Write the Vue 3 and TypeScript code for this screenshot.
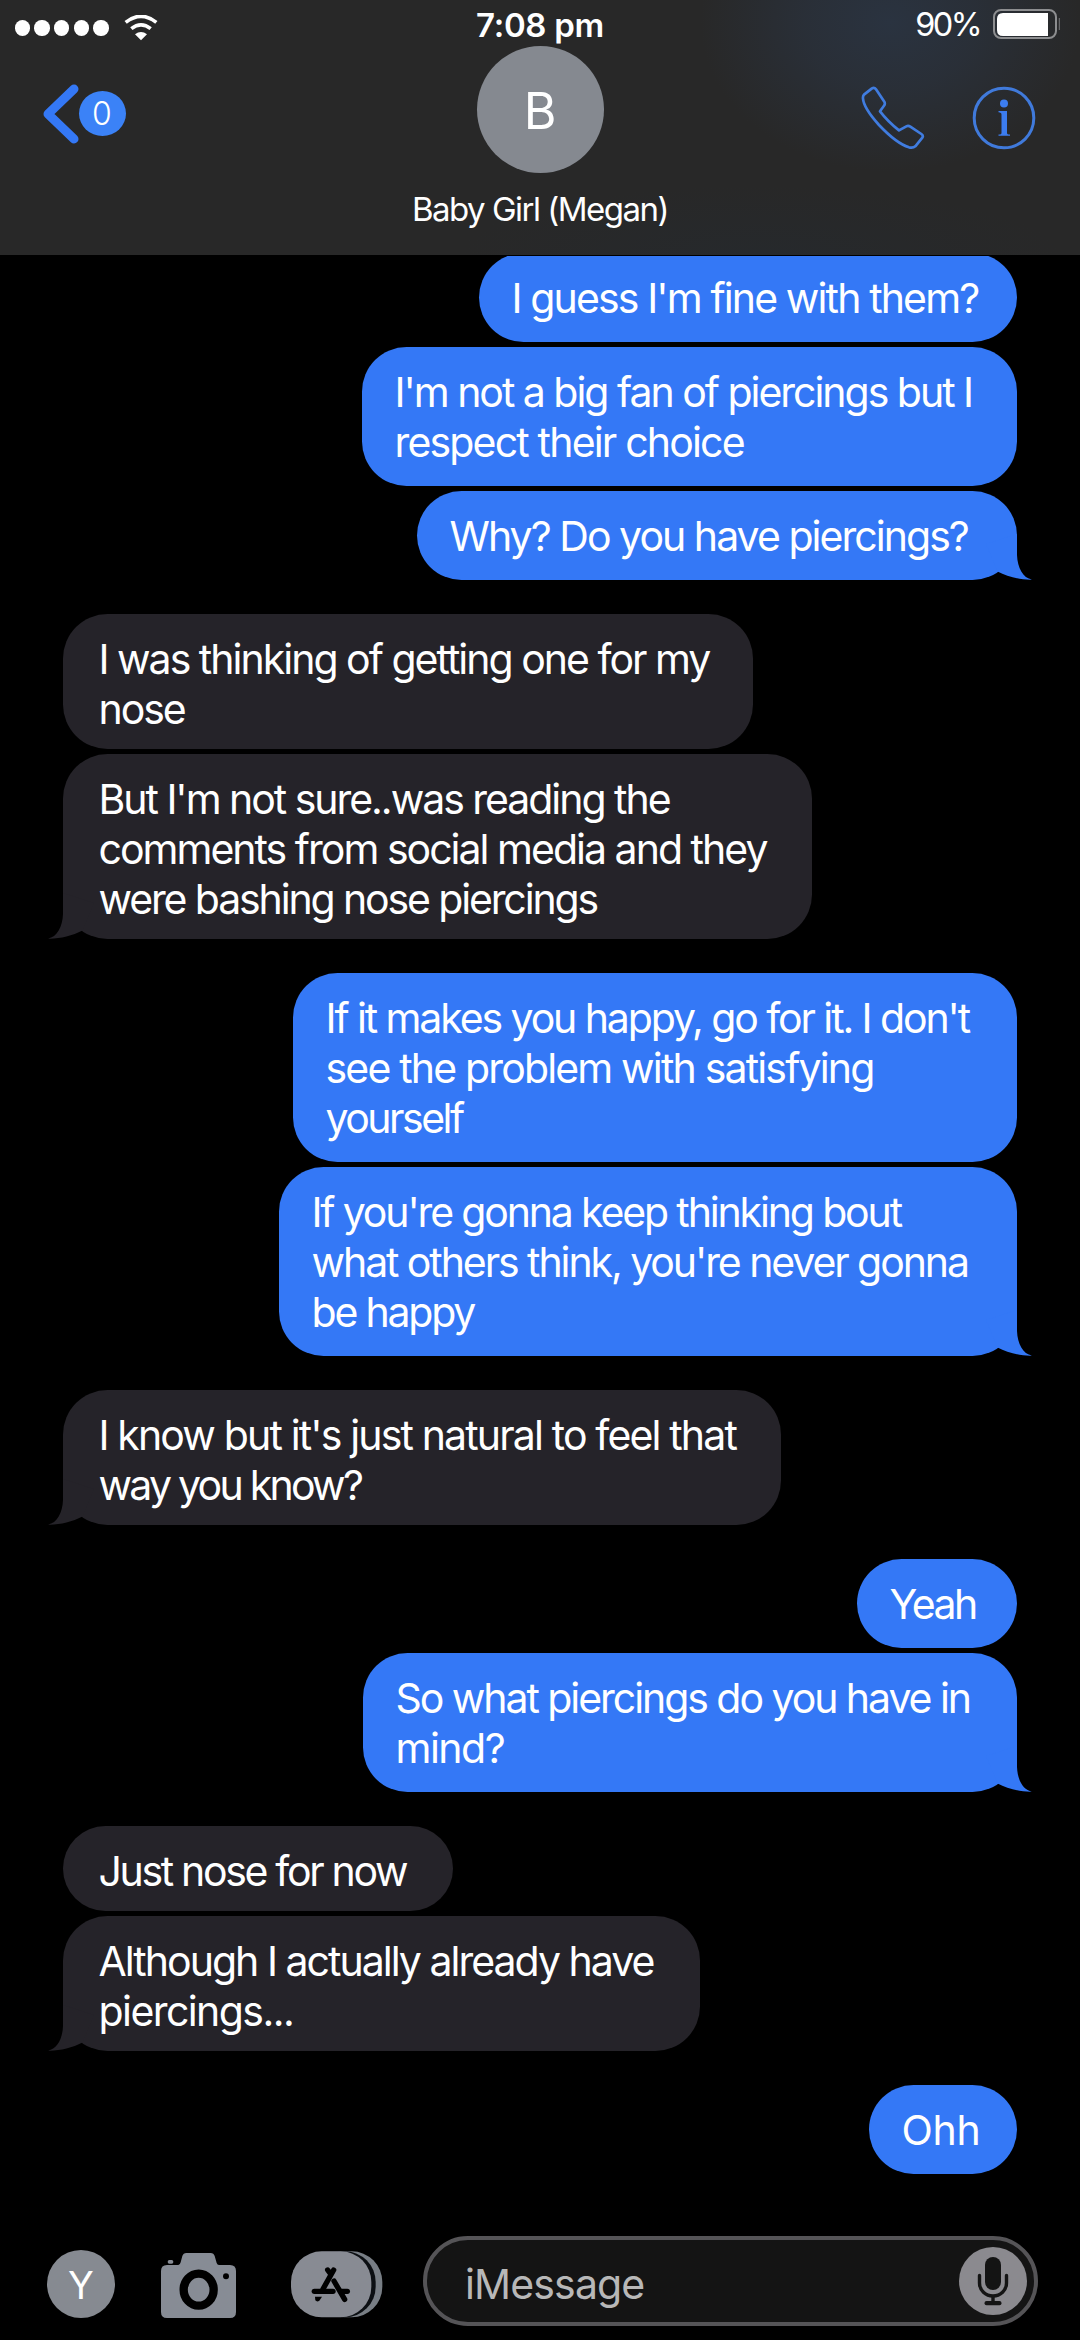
<script setup lang="ts">
interface Line {
  text: string
  spacing: number
}

interface Message {
  from: 'me' | 'them'
  width: number
  lines: Line[]
  tail?: boolean
}

const l = (text: string, spacing: number): Line => ({ text, spacing })

const groups: Message[][] = [
  [
    { from: 'me', width: 538, lines: [l("I guess I'm fine with them?", -1.87)] },
    {
      from: 'me',
      width: 655,
      lines: [l("I'm not a big fan of piercings but I", -2.02), l('respect their choice', -1.82)],
    },
    { from: 'me', width: 600, tail: true, lines: [l('Why? Do you have piercings?', -1.96)] },
  ],
  [
    { from: 'them', width: 690, lines: [l('I was thinking of getting one for my', -1.99), l('nose', -2.07)] },
    {
      from: 'them',
      width: 749,
      tail: true,
      lines: [
        l("But I'm not sure..was reading the", -2.03),
        l('comments from social media and they', -1.98),
        l('were bashing nose piercings', -2.13),
      ],
    },
  ],
  [
    {
      from: 'me',
      width: 724,
      lines: [
        l("If it makes you happy, go for it. I don't", -2.1),
        l('see the problem with satisfying', -1.83),
        l('yourself', -2.5),
      ],
    },
    {
      from: 'me',
      width: 738,
      tail: true,
      lines: [
        l("If you're gonna keep thinking bout", -2.15),
        l("what others think, you're never gonna", -2.08),
        l('be happy', -2.2),
      ],
    },
  ],
  [
    {
      from: 'them',
      width: 718,
      tail: true,
      lines: [l("I know but it's just natural to feel that", -1.85), l('way you know?', -2.74)],
    },
  ],
  [
    { from: 'me', width: 160, lines: [l('Yeah', -2.5)] },
    { from: 'me', width: 654, tail: true, lines: [l('So what piercings do you have in', -2.05), l('mind?', -1.5)] },
  ],
  [
    { from: 'them', width: 390, lines: [l('Just nose for now', -2.33)] },
    {
      from: 'them',
      width: 637,
      tail: true,
      lines: [l('Although I actually already have', -1.98), l('piercings...', -1.57)],
    },
  ],
  [{ from: 'me', width: 148, lines: [l('Ohh', -0.25)] }],
]
</script>

<template>
  <div class="screen">
    <header class="header">
      <div class="status">
        <div class="signal">
          <i v-for="n in 5" :key="n" class="dot"></i>
          <svg class="wifi" width="34" height="26" viewBox="0 0 102 78">
            <path d="M5 22 Q51 -14 97 22" fill="none" stroke="#fff" stroke-width="11" />
            <path d="M22 41 Q51 18 80 41" fill="none" stroke="#fff" stroke-width="11" />
            <path d="M33 58 Q51 44 69 58 L51 76Z" fill="#fff" />
          </svg>
        </div>
        <div class="clock">7:08 pm</div>
        <div class="power">
          <span class="percent">90%</span>
          <svg width="68" height="32" viewBox="0 0 68 32">
            <rect x="1" y="2" width="62" height="28" rx="7" fill="none" stroke="#8d8e90" stroke-width="2" />
            <path d="M10 5 H55 V28 H10 Q4 28 4 22 V11 Q4 5 10 5Z" fill="#fff" />
            <path d="M66.3 10 V22" stroke="#77797b" stroke-width="1" />
          </svg>
        </div>
      </div>
      <div class="nav">
        <div class="back">
          <svg width="36" height="60" viewBox="0 0 36 60">
            <path d="M31 5 L5 30 L31 55" fill="none" stroke="#3478f6" stroke-width="9" stroke-linecap="round" stroke-linejoin="round" />
          </svg>
          <span class="count">0</span>
        </div>
        <div class="contact">
          <div class="avatar">B</div>
          <div class="name">Baby Girl (Megan)</div>
        </div>
        <div class="actions">
          <svg width="64" height="64" viewBox="424 258 192 192">
            <path d="M433 284 L457 265 Q464 261 469 268 L494 305 Q497 310 494 316 L481 334 Q505 365 538 391 L560 379 Q566 376 572 380 L605 402 Q612 407 608 413 L587 439 Q580 445 568 442 Q530 430 478 375 Q432 324 430 296 Q429 289 433 284Z" fill="none" stroke="#407cdf" stroke-width="8" stroke-linejoin="round" />
          </svg>
          <svg width="64" height="64" viewBox="0 0 64 64">
            <circle cx="32" cy="32" r="29.800" fill="none" stroke="#407adb" stroke-width="3" />
            <circle cx="32" cy="17.500" r="4" fill="#3c7df0" />
            <path d="M26.500 25 H35 V47 Q35 48.500 38 48.500 V49.700 H26.500 V48.500 Q29.500 48.500 29.500 47 V28.500 Q29.500 26.500 26.500 26.300Z" fill="#3c7df0" />
          </svg>
        </div>
      </div>
    </header>

    <main class="chat">
      <section v-for="(group, g) in groups" :key="g" class="group">
        <div v-for="(msg, k) in group" :key="k" class="bubble" :class="msg.from" :style="{ width: msg.width + 'px' }">
          <span v-for="line in msg.lines" :key="line.text" class="line" :style="{ letterSpacing: line.spacing + 'px' }">{{ line.text }}</span>
          <svg v-if="msg.tail" class="tail" width="46" height="46" viewBox="0 0 46 46">
            <path d="M31 0 V21 C31.500 34 37 44 46 45.600 C35 46 22 43 11.500 37.500 L0 10Z" fill="currentColor" />
          </svg>
        </div>
      </section>
    </main>

    <footer class="composer">
      <div class="me-avatar">Y</div>
      <svg class="camera" width="75" height="65" viewBox="483 159 225 195">
        <path d="M501 195 H535 Q540 195 542 187 L547 168 Q550 159 559 159 H632 Q641 159 644 168 L650 189 Q652 195 657 195 H690 Q708 195 708 213 V336 Q708 354 690 354 H501 Q483 354 483 336 V213 Q483 195 501 195Z" fill="#878c95" />
        <rect x="503" y="180" width="17" height="11" rx="5" fill="#878c95" />
        <ellipse cx="596" cy="269" rx="45" ry="48" fill="none" stroke="#000" stroke-width="25" />
        <circle cx="678" cy="229" r="9" fill="#000" />
      </svg>
      <svg class="apps" width="92" height="67" viewBox="872 152 276 201">
        <rect x="940" y="153" width="206" height="198" rx="92" fill="#787e85" />
        <rect x="886" y="153" width="240" height="198" rx="92" fill="#0c0f13" />
        <rect x="872" y="153" width="241" height="198" rx="92" fill="#888b93" />
        <g stroke="#000" stroke-width="16" stroke-linecap="round" fill="none">
          <path d="M942 273 H998" />
          <path d="M1024 273 H1041" />
          <path d="M1000 209 L968 266" />
          <path d="M982 209 L988 217" />
          <path d="M1001 242 L1033 297" />
        </g>
        <path d="M944 289 H965 L957 301 Q950 306 945 300Z" fill="#000" />
      </svg>
      <div class="field">
        <span class="placeholder">iMessage</span>
        <svg width="68" height="68" viewBox="0 0 68 68">
          <circle cx="34" cy="34" r="34" fill="#8b8a8f" />
          <rect x="26" y="10" width="16" height="33" rx="8" fill="#141414" />
          <path d="M20.500 28.500 V36 A13.500 13 0 0 0 47.500 36 V28.500" fill="none" stroke="#141414" stroke-width="3.400" stroke-linecap="round" />
          <path d="M34 49 V55" stroke="#141414" stroke-width="3.400" />
          <rect x="25.500" y="54" width="17" height="4.200" rx="2" fill="#141414" />
        </svg>
      </div>
    </footer>
  </div>
</template>

<style>
body {
  background: #000;
}
</style>

<style scoped>
.screen {
  width: 1080px;
  height: 2340px;
  display: flex;
  flex-direction: column;
  overflow: hidden;
  background: #000;
  color: #fff;
  font-family: Inter, Roboto, sans-serif;
}
.header {
  position: relative;
  z-index: 1;
  box-sizing: border-box;
  height: 256px;
  flex: none;
  border-bottom: 1px solid #000;
  background:
    radial-gradient(ellipse 190px 150px at 890px 22px, #2a3340 0%, rgba(42, 50, 62, 0.7) 45%, rgba(40, 41, 43, 0) 100%),
    radial-gradient(ellipse 300px 70px at 760px 255px, #26292c 0%, rgba(40, 40, 40, 0) 100%),
    #282828;
}
.status {
  height: 46px;
  display: grid;
  grid-template-columns: 1fr auto 1fr;
}
.signal {
  display: flex;
  align-items: center;
  gap: 4.4px;
  padding: 6px 0 0 14.7px;
}
.dot {
  width: 15.3px;
  height: 15.3px;
  border-radius: 50%;
  background: #fff;
}
.wifi {
  margin-left: 10.5px;
}
.clock {
  font-size: 33px;
  font-weight: 600;
  line-height: 50px;
  letter-spacing: -0.3px;
}
.power {
  display: flex;
  justify-content: flex-end;
  gap: 13px;
  padding-right: 19px;
}
.power svg {
  margin-top: 8px;
}
.percent {
  font-size: 32.5px;
  line-height: 50px;
  letter-spacing: -2.6px;
}
.nav {
  display: grid;
  grid-template-columns: 1fr auto 1fr;
}
.back {
  display: flex;
  align-items: flex-start;
  padding: 38px 0 0 42.5px;
}
.count {
  width: 47px;
  height: 45px;
  margin-top: 7px;
  border-radius: 50%;
  background: #3b82f7;
  font-size: 32px;
  font-weight: 300;
  line-height: 46px;
  text-align: center;
}
.contact {
  width: 300px;
  display: flex;
  flex-direction: column;
  align-items: center;
}
.avatar {
  width: 127px;
  height: 127px;
  border-radius: 50%;
  background: #858990;
  font-size: 50px;
  line-height: 131px;
  text-align: center;
}
.name {
  margin-top: 11px;
  font-size: 33px;
  line-height: 50px;
  letter-spacing: -1.5px;
}
.actions {
  display: flex;
  justify-content: flex-end;
  align-items: flex-start;
  gap: 47px;
  padding: 40px 44px 0 0;
}
.chat {
  margin-top: -3px;
  flex: 1;
  display: flex;
  flex-direction: column;
  gap: 34px;
  padding: 0 63px;
}
.group {
  display: flex;
  flex-direction: column;
  gap: 5px;
}
.bubble {
  position: relative;
  box-sizing: border-box;
  display: flex;
  flex-direction: column;
  align-items: flex-start;
  border-radius: 44.5px;
  font-size: 41px;
  line-height: 50px;
}
.me {
  align-self: flex-end;
  padding: 20px 0 19px 32.5px;
  background: #3478f6;
}
.them {
  align-self: flex-start;
  padding: 20px 0 15px 35.5px;
  background: #252329;
}
.line {
  white-space: pre;
}
.tail {
  position: absolute;
  bottom: 0;
  right: -15px;
  color: #3478f6;
}
.them .tail {
  right: auto;
  left: -15px;
  color: #252329;
  transform: scaleX(-1);
}
.composer {
  flex: none;
  height: 90px;
  display: flex;
  align-items: center;
  padding: 0 42px 14px 47px;
}
.me-avatar {
  width: 68px;
  height: 68px;
  margin-top: 6px;
  border-radius: 50%;
  background: #868a91;
  font-size: 38px;
  line-height: 70px;
  text-align: center;
}
.camera {
  margin: 9px 0 0 46px;
}
.apps {
  margin: 6px 0 0 55px;
}
.field {
  box-sizing: border-box;
  width: 615px;
  height: 90px;
  margin-left: auto;
  display: flex;
  justify-content: space-between;
  align-items: center;
  padding: 0 7px 0 38px;
  border: 4px solid #555457;
  border-radius: 45px;
  background: #141414;
}
.placeholder {
  padding-top: 5px;
  font-size: 41px;
  letter-spacing: -0.85px;
  color: #b8b8b8;
}
</style>
